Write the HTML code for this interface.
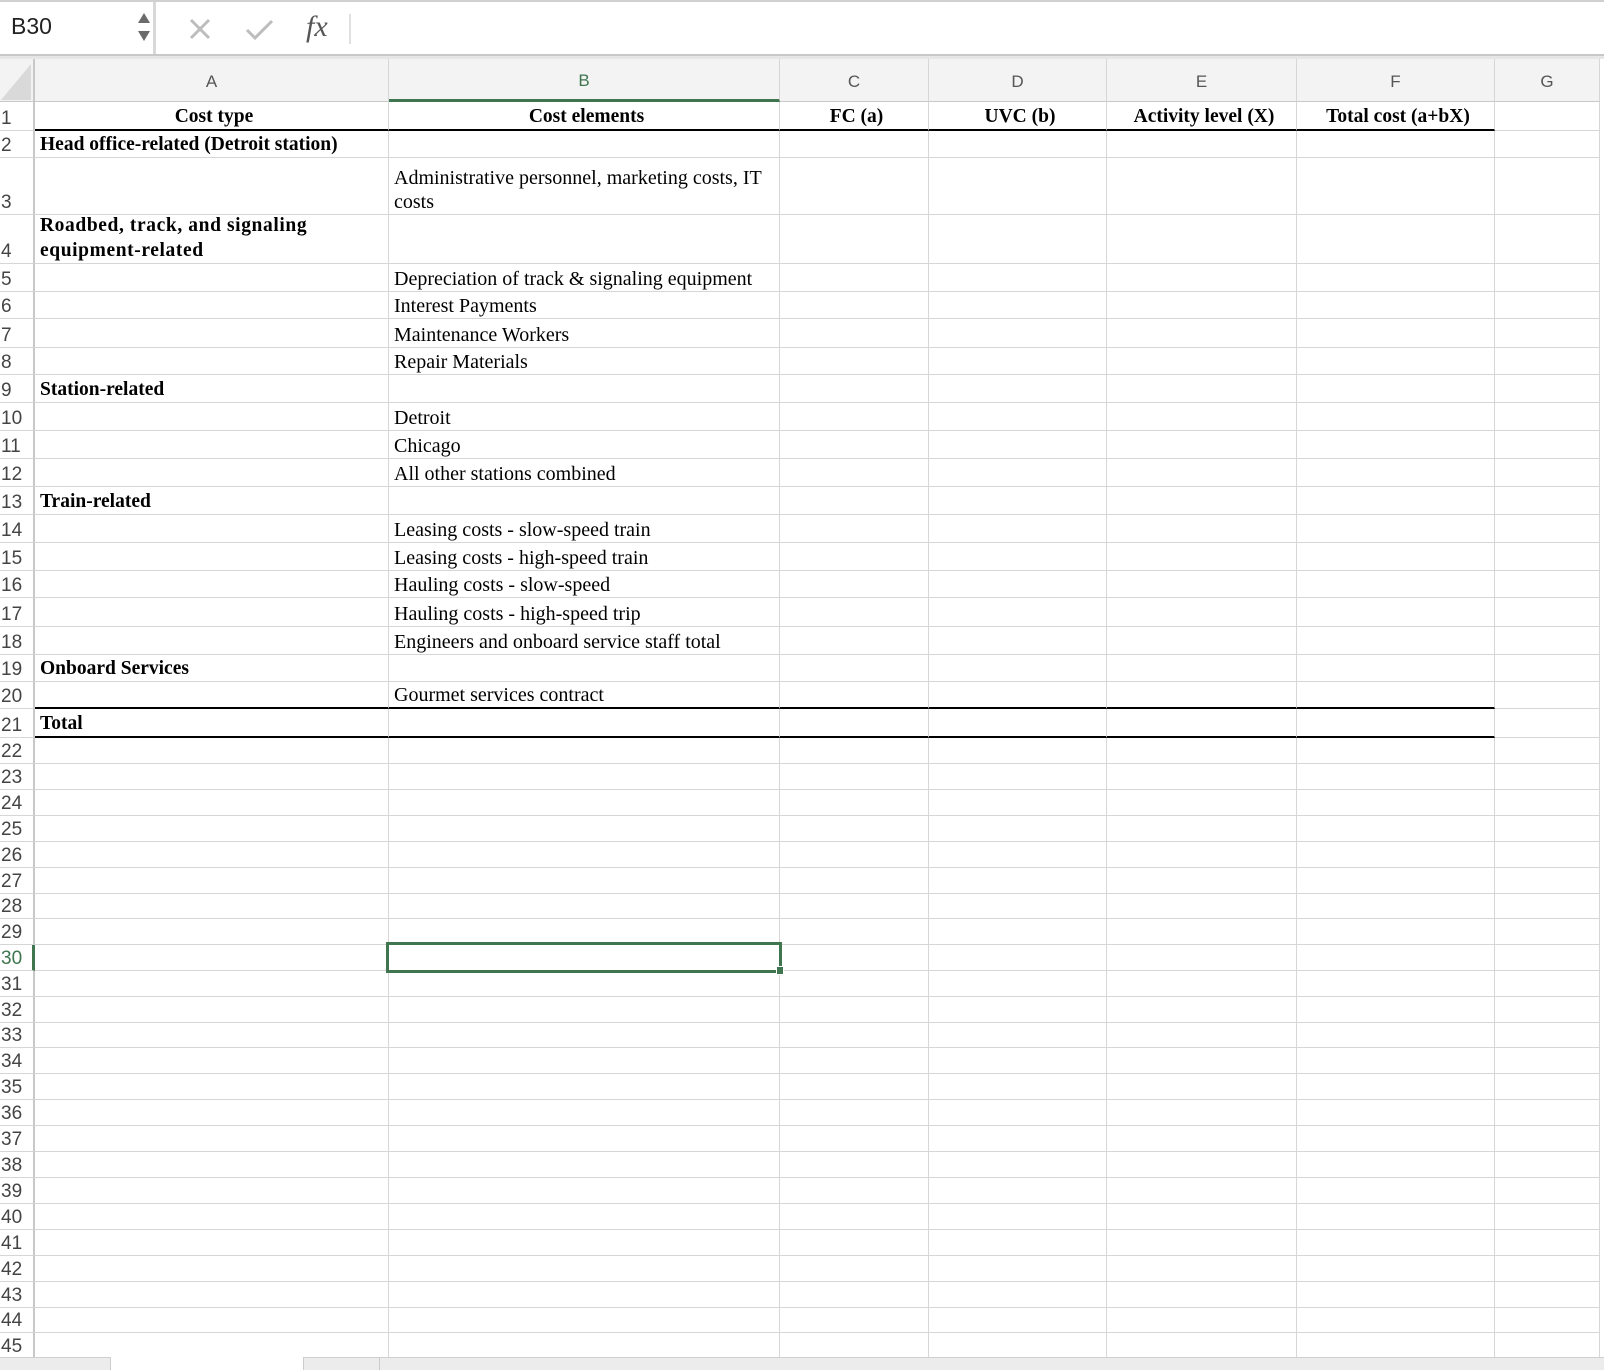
<!DOCTYPE html>
<html><head><meta charset="utf-8"><style>
*{box-sizing:border-box;margin:0;padding:0}
body{width:1604px;height:1370px;overflow:hidden;background:#fff;position:relative;font-family:"Liberation Serif",serif}
.r{position:absolute;left:0;display:flex;width:1604px}
.r>div{border-right:1px solid #d6d6d6;border-bottom:1px solid #d6d6d6;font-size:20px;color:#000;display:flex;align-items:flex-end;padding:0 0 0 5px;white-space:nowrap;overflow:visible;line-height:24px}
.r>div:nth-child(1){width:35px;font-family:"Liberation Sans",sans-serif;font-size:19px;color:#444;padding-left:1px;border-right:2px solid #c8c8c8;background:#fff;line-height:23px}
.r>div:nth-child(2){width:354px}
.r>div:nth-child(3){width:391px}
.r>div:nth-child(4){width:149px}
.r>div:nth-child(5){width:178px}
.r>div:nth-child(6){width:190px}
.r>div:nth-child(7){width:198px}
.r>div:nth-child(8){width:105px}
.r>div:nth-child(9){width:0;border:none;padding:0}
.b{font-weight:bold;font-size:19.5px!important}
.c{justify-content:center}
.tk{border-bottom:2px solid #000 !important}
.h>div{background:#f3f3f3;font-family:"Liberation Sans",sans-serif;color:#555;font-size:17px!important;justify-content:center;align-items:center;padding:4px 0 0 0;border-bottom:1px solid #c8c8c8}
.wrap{white-space:nowrap;line-height:26px}
</style></head><body>
<div style="position:absolute;left:0;top:0;width:1604px;height:56px;background:#fff;border-top:2px solid #d0d0d0;border-bottom:2px solid #c8c8c8"></div>
<div style="position:absolute;left:0;top:2px;width:156px;height:52px;border-right:3px solid #d8d8d8"></div>
<div style="position:absolute;left:11px;top:13px;font-family:'Liberation Sans',sans-serif;font-size:23px;color:#222">B30</div>
<svg style="position:absolute;left:134px;top:8px" width="20" height="40"><path d="M4 15 L10 5 L16 15Z" fill="#6b6b6b"/><path d="M4 23 L10 33 L16 23Z" fill="#6b6b6b"/></svg>
<svg style="position:absolute;left:188px;top:17px" width="26" height="26"><path d="M3 3 L21 21 M21 3 L3 21" stroke="#bdbdbd" stroke-width="3"/></svg>
<svg style="position:absolute;left:244px;top:17px" width="32" height="26"><path d="M3 13 L11 21 L28 4" stroke="#bdbdbd" stroke-width="3" fill="none"/></svg>
<div style="position:absolute;left:306px;top:10px;font-family:'Liberation Serif',serif;font-style:italic;font-size:30px;color:#555">fx</div>
<div style="position:absolute;left:349px;top:14px;width:2px;height:30px;background:#e0e0e0"></div>
<div style="position:absolute;left:0;top:56px;width:1604px;height:3px;background:#e6e6e6"></div>

<div class="r h" style="top:59px;height:43px"><div style="background:#f3f3f3;padding:0"><svg width="32" height="40"><path d="M30 4 L30 40 L0 40Z" fill="#d9d9d9"/></svg></div><div>A</div><div style="color:#3f7650;border-bottom:3px solid #3f7650">B</div><div>C</div><div>D</div><div>E</div><div>F</div><div>G</div><div></div></div>

<div class="r" style="top:102px;height:29px"><div>1</div><div class="b c tk">Cost type</div><div class="b c tk">Cost elements</div><div class="b c tk">FC (a)</div><div class="b c tk">UVC (b)</div><div class="b c tk">Activity level (X)</div><div class="b c tk">Total cost (a+bX)</div><div></div></div>
<div class="r" style="top:131px;height:27px"><div>2</div><div class="b">Head office-related (Detroit station)</div><div></div><div></div><div></div><div></div><div></div><div></div></div>
<div class="r" style="top:158px;height:57px"><div>3</div><div></div><div class="wrap">Administrative personnel, marketing costs, IT<br>costs</div><div></div><div></div><div></div><div></div><div></div></div>
<div class="r" style="top:215px;height:49px"><div>4</div><div class="b wrap" style="line-height:25px;letter-spacing:0.6px">Roadbed, track, and signaling<br>equipment-related</div><div></div><div></div><div></div><div></div><div></div><div></div></div>
<div class="r" style="top:264px;height:28px"><div>5</div><div></div><div>Depreciation of track &amp; signaling equipment</div><div></div><div></div><div></div><div></div><div></div></div>
<div class="r" style="top:292px;height:27px"><div>6</div><div></div><div>Interest Payments</div><div></div><div></div><div></div><div></div><div></div></div>
<div class="r" style="top:319px;height:29px"><div>7</div><div></div><div>Maintenance Workers</div><div></div><div></div><div></div><div></div><div></div></div>
<div class="r" style="top:348px;height:27px"><div>8</div><div></div><div>Repair Materials</div><div></div><div></div><div></div><div></div><div></div></div>
<div class="r" style="top:375px;height:28px"><div>9</div><div class="b">Station-related</div><div></div><div></div><div></div><div></div><div></div><div></div></div>
<div class="r" style="top:403px;height:28px"><div>10</div><div></div><div>Detroit</div><div></div><div></div><div></div><div></div><div></div></div>
<div class="r" style="top:431px;height:28px"><div>11</div><div></div><div>Chicago</div><div></div><div></div><div></div><div></div><div></div></div>
<div class="r" style="top:459px;height:28px"><div>12</div><div></div><div>All other stations combined</div><div></div><div></div><div></div><div></div><div></div></div>
<div class="r" style="top:487px;height:28px"><div>13</div><div class="b">Train-related</div><div></div><div></div><div></div><div></div><div></div><div></div></div>
<div class="r" style="top:515px;height:28px"><div>14</div><div></div><div>Leasing costs - slow-speed train</div><div></div><div></div><div></div><div></div><div></div></div>
<div class="r" style="top:543px;height:28px"><div>15</div><div></div><div>Leasing costs - high-speed train</div><div></div><div></div><div></div><div></div><div></div></div>
<div class="r" style="top:571px;height:27px"><div>16</div><div></div><div>Hauling costs - slow-speed</div><div></div><div></div><div></div><div></div><div></div></div>
<div class="r" style="top:598px;height:29px"><div>17</div><div></div><div>Hauling costs - high-speed trip</div><div></div><div></div><div></div><div></div><div></div></div>
<div class="r" style="top:627px;height:28px"><div>18</div><div></div><div>Engineers and onboard service staff total</div><div></div><div></div><div></div><div></div><div></div></div>
<div class="r" style="top:655px;height:27px"><div>19</div><div class="b">Onboard Services</div><div></div><div></div><div></div><div></div><div></div><div></div></div>
<div class="r" style="top:682px;height:27px"><div>20</div><div class="tk"></div><div class="tk">Gourmet services contract</div><div class="tk"></div><div class="tk"></div><div class="tk"></div><div class="tk"></div><div></div></div>
<div class="r" style="top:709px;height:29px"><div>21</div><div class="b tk">Total</div><div class="tk"></div><div class="tk"></div><div class="tk"></div><div class="tk"></div><div class="tk"></div><div></div></div>
<div class="r" style="top:738px;height:26px"><div>22</div><div></div><div></div><div></div><div></div><div></div><div></div><div></div></div>
<div class="r" style="top:764px;height:26px"><div>23</div><div></div><div></div><div></div><div></div><div></div><div></div><div></div></div>
<div class="r" style="top:790px;height:26px"><div>24</div><div></div><div></div><div></div><div></div><div></div><div></div><div></div></div>
<div class="r" style="top:816px;height:26px"><div>25</div><div></div><div></div><div></div><div></div><div></div><div></div><div></div></div>
<div class="r" style="top:842px;height:26px"><div>26</div><div></div><div></div><div></div><div></div><div></div><div></div><div></div></div>
<div class="r" style="top:868px;height:26px"><div>27</div><div></div><div></div><div></div><div></div><div></div><div></div><div></div></div>
<div class="r" style="top:894px;height:25px"><div>28</div><div></div><div></div><div></div><div></div><div></div><div></div><div></div></div>
<div class="r" style="top:919px;height:26px"><div>29</div><div></div><div></div><div></div><div></div><div></div><div></div><div></div></div>
<div class="r" style="top:945px;height:26px"><div style="color:#3f7650;border-right:3px solid #3f7650">30</div><div></div><div></div><div></div><div></div><div></div><div></div><div></div></div>
<div class="r" style="top:971px;height:26px"><div>31</div><div></div><div></div><div></div><div></div><div></div><div></div><div></div></div>
<div class="r" style="top:997px;height:26px"><div>32</div><div></div><div></div><div></div><div></div><div></div><div></div><div></div></div>
<div class="r" style="top:1023px;height:25px"><div>33</div><div></div><div></div><div></div><div></div><div></div><div></div><div></div></div>
<div class="r" style="top:1048px;height:26px"><div>34</div><div></div><div></div><div></div><div></div><div></div><div></div><div></div></div>
<div class="r" style="top:1074px;height:26px"><div>35</div><div></div><div></div><div></div><div></div><div></div><div></div><div></div></div>
<div class="r" style="top:1100px;height:26px"><div>36</div><div></div><div></div><div></div><div></div><div></div><div></div><div></div></div>
<div class="r" style="top:1126px;height:26px"><div>37</div><div></div><div></div><div></div><div></div><div></div><div></div><div></div></div>
<div class="r" style="top:1152px;height:26px"><div>38</div><div></div><div></div><div></div><div></div><div></div><div></div><div></div></div>
<div class="r" style="top:1178px;height:26px"><div>39</div><div></div><div></div><div></div><div></div><div></div><div></div><div></div></div>
<div class="r" style="top:1204px;height:26px"><div>40</div><div></div><div></div><div></div><div></div><div></div><div></div><div></div></div>
<div class="r" style="top:1230px;height:26px"><div>41</div><div></div><div></div><div></div><div></div><div></div><div></div><div></div></div>
<div class="r" style="top:1256px;height:26px"><div>42</div><div></div><div></div><div></div><div></div><div></div><div></div><div></div></div>
<div class="r" style="top:1282px;height:26px"><div>43</div><div></div><div></div><div></div><div></div><div></div><div></div><div></div></div>
<div class="r" style="top:1308px;height:25px"><div>44</div><div></div><div></div><div></div><div></div><div></div><div></div><div></div></div>
<div class="r" style="top:1333px;height:26px"><div>45</div><div></div><div></div><div></div><div></div><div></div><div></div><div></div></div>

<div style="position:absolute;left:386px;top:942px;width:396px;height:31px;border:3px solid #3f7650"></div>
<div style="position:absolute;left:776px;top:966px;width:8px;height:9px;background:#3f7650;border:1px solid #fff"></div>

<div style="position:absolute;left:0;top:1357px;width:111px;height:13px;background:#ececec;border-top:1px solid #d0d0d0;border-right:1px solid #ccc"></div>
<div style="position:absolute;left:111px;top:1357px;width:192px;height:13px;background:#fff"></div>
<div style="position:absolute;left:303px;top:1357px;width:1301px;height:13px;background:#ececec;border-top:1px solid #d0d0d0;border-left:1px solid #ccc"></div>
<div style="position:absolute;left:379px;top:1357px;width:1px;height:13px;background:#ccc"></div>
</body></html>
